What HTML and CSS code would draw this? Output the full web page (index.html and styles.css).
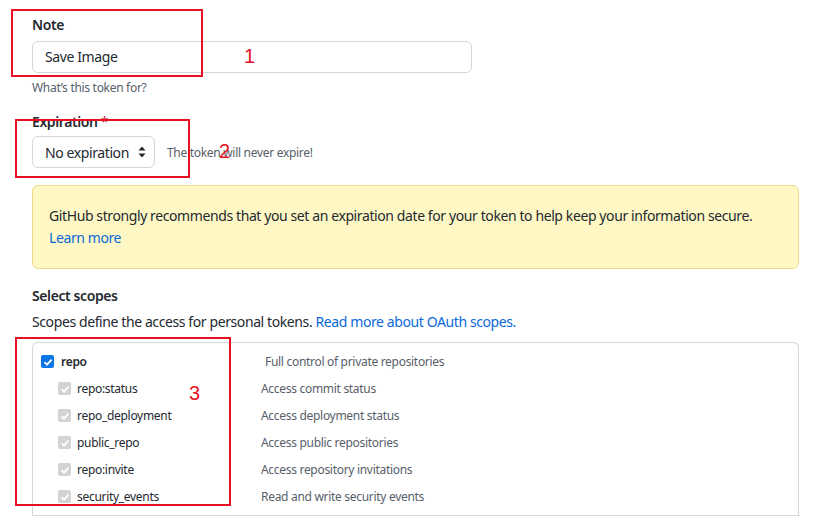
FILE: index.html
```html
<!DOCTYPE html>
<html>
<head>
<meta charset="utf-8">
<link rel="stylesheet" href="styles.css">
</head>
<body>
<div class="page">
  <div class="group note-group">
    <label class="label">Note</label>
    <div class="input">Save Image</div>
    <p class="hint">What’s this token for?</p>
  </div>
  <div class="group exp-group">
    <label class="label label-exp">Expiration <span class="req">*</span></label>
    <div class="exp-row">
      <div class="select">No expiration
        <svg class="caret" width="10" height="14" viewBox="0 0 10 14"><path d="M5 1.5 L8.5 5.5 H1.5 Z M5 12.5 L8.5 8.5 H1.5 Z" fill="#24292f"/></svg>
      </div>
      <span class="exp-note">The token will never expire!</span>
    </div>
  </div>
  <div class="flash">
    <p>GitHub strongly recommends that you set an expiration date for your token to help keep your information secure.</p>
    <a class="link">Learn more</a>
  </div>
  <h3 class="scopes-title">Select scopes</h3>
  <p class="scopes-desc">Scopes define the access for personal tokens. <a class="link">Read more about OAuth scopes.</a></p>
  <div class="scopes">
    <div class="row parent">
      <span class="cb cb-on"><svg width="12" height="12" viewBox="0 0 12 12"><path d="M2.5 6.2 L5 8.6 L9.6 3.6" stroke="#fff" stroke-width="1.8" fill="none"/></svg></span>
      <span class="name name-bold">repo</span>
      <span class="desc">Full control of private repositories</span>
    </div>
    <div class="row child">
      <span class="cb cb-dis"><svg width="12" height="12" viewBox="0 0 12 12"><path d="M2.5 6.2 L5 8.6 L9.6 3.6" stroke="#fff" stroke-width="1.8" fill="none"/></svg></span>
      <span class="name">repo:status</span>
      <span class="desc">Access commit status</span>
    </div>
    <div class="row child">
      <span class="cb cb-dis"><svg width="12" height="12" viewBox="0 0 12 12"><path d="M2.5 6.2 L5 8.6 L9.6 3.6" stroke="#fff" stroke-width="1.8" fill="none"/></svg></span>
      <span class="name">repo_deployment</span>
      <span class="desc">Access deployment status</span>
    </div>
    <div class="row child">
      <span class="cb cb-dis"><svg width="12" height="12" viewBox="0 0 12 12"><path d="M2.5 6.2 L5 8.6 L9.6 3.6" stroke="#fff" stroke-width="1.8" fill="none"/></svg></span>
      <span class="name">public_repo</span>
      <span class="desc">Access public repositories</span>
    </div>
    <div class="row child">
      <span class="cb cb-dis"><svg width="12" height="12" viewBox="0 0 12 12"><path d="M2.5 6.2 L5 8.6 L9.6 3.6" stroke="#fff" stroke-width="1.8" fill="none"/></svg></span>
      <span class="name">repo:invite</span>
      <span class="desc">Access repository invitations</span>
    </div>
    <div class="row child">
      <span class="cb cb-dis"><svg width="12" height="12" viewBox="0 0 12 12"><path d="M2.5 6.2 L5 8.6 L9.6 3.6" stroke="#fff" stroke-width="1.8" fill="none"/></svg></span>
      <span class="name">security_events</span>
      <span class="desc">Read and write security events</span>
    </div>
    <div class="row-end"></div>
  </div>

  <div class="mark mark1"></div>
  <div class="num num1">1</div>
  <div class="mark mark2"></div>
  <div class="num num2">2</div>
  <div class="mark mark3"></div>
  <div class="num num3">3</div>
</div>
</body>
</html>
```
FILE: styles.css
```css
* { box-sizing: border-box; }
html, body { margin: 0; padding: 0; background: #fff; }
body {
  font-family: "Noto Sans", "Liberation Sans", sans-serif;
  color: #24292f;
  font-size: 14px;
  letter-spacing: -0.4px;
  overflow: hidden;
}
.page {
  position: relative;
  width: 830px;
  height: 521px;
  padding: 15px 31px 0 32px;
}
p { margin: 0; }
.label {
  display: block;
  font-weight: 600;
  font-size: 14px;
  line-height: 20px;
  margin-bottom: 6px;
}
.label-exp { margin-bottom: 4px; }
.input {
  width: 440px;
  height: 32px;
  border: 1px solid #d0d7de;
  border-radius: 6px;
  padding: 0 12px;
  line-height: 30px;
  font-size: 14px;
}
.hint {
  font-size: 12px;
  letter-spacing: -0.3px;
  color: #57606a;
  margin-top: 6px;
  line-height: 18px;
}
.exp-group { margin-top: 15px; }
.req { color: #cf222e; font-weight: 400; }
.exp-row { display: flex; align-items: center; gap: 12px; }
.select {
  display: flex;
  align-items: center;
  gap: 8px;
  height: 32px;
  border: 1px solid #d0d7de;
  border-radius: 6px;
  padding: 0 7px 0 12px;
  font-size: 14px;
}
.exp-note { font-size: 12px; letter-spacing: -0.3px; color: #57606a; }
.flash {
  margin-top: 17px;
  background: #fff8c5;
  border: 1px solid #eedc8e;
  border-radius: 6px;
  padding: 19px 16px;
  height: 84px;
  line-height: 22px;
}
.link { color: #0969da; text-decoration: none; }
.scopes-title {
  margin: 17px 0 0;
  font-size: 14px;
  font-weight: 600;
  line-height: 20px;
}
.scopes-desc { margin-top: 6px; line-height: 20px; }
.scopes {
  margin-top: 10px;
  border: 1px solid #d0d7de;
  border-bottom: none;
  border-radius: 6px 6px 0 0;
  padding-top: 5px;
}
.row {
  display: flex;
  align-items: center;
  height: 27px;
  font-size: 12px;
  letter-spacing: -0.3px;
}
.cb {
  width: 13px;
  height: 13px;
  border-radius: 2px;
  display: flex;
  align-items: center;
  justify-content: center;
  flex: none;
}
.cb-on { background: #0a75e4; }
.cb-dis { background: #d3d3d3; }
.parent { padding-left: 8px; }
.parent .cb { margin-right: 7px; }
.child { padding-left: 25px; }
.child .cb { margin-right: 6px; }
.name { width: 184px; flex: none; }
.name-bold { font-weight: 600; width: 204px; }
.desc { color: #57606a; }
.row-end { height: 6px; border-bottom: 1px solid #d0d7de; margin-right: -2px; }

.mark {
  position: absolute;
  border: 2px solid #e81123;
}
.mark1 { left: 11px; top: 9px; width: 192px; height: 68px; }
.mark2 { left: 15px; top: 119px; width: 175px; height: 59px; }
.mark3 { left: 15px; top: 337px; width: 216px; height: 169px; }
.num {
  position: absolute;
  color: #e81123;
  font-size: 20px;
  letter-spacing: 0;
  font-family: "Liberation Sans", sans-serif;
  line-height: 20px;
}
.num1 { left: 244px; top: 46px; }
.num2 { left: 219px; top: 141px; }
.num3 { left: 189px; top: 383px; }
```
